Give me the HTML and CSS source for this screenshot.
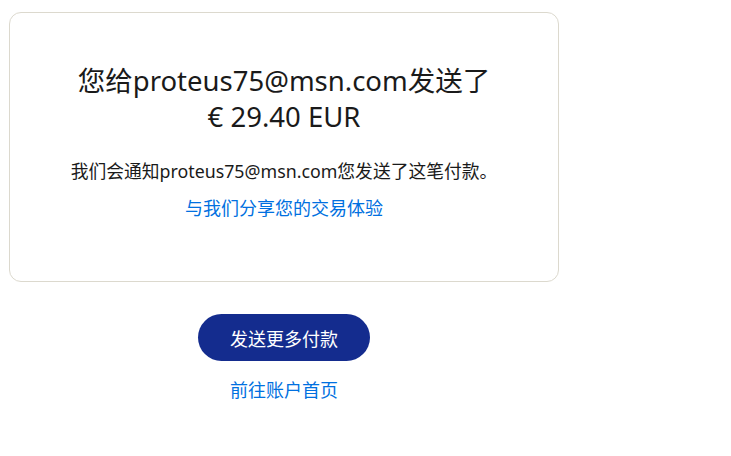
FILE: index.html
```html
<!DOCTYPE html>
<html lang="zh-CN">
<head>
<meta charset="utf-8">
<title>付款已发送</title>
<link rel="stylesheet" href="styles.css">
</head>
<body>
<main class="page">
  <section class="card">
    <h1 class="title">您给proteus75@msn.com发送了<br>€ 29.40 EUR</h1>
    <p class="note">我们会通知proteus75@msn.com您发送了这笔付款。</p>
    <a class="link" href="#">与我们分享您的交易体验</a>
  </section>
  <div class="actions">
    <a class="btn" href="#">发送更多付款</a>
    <a class="link" href="#">前往账户首页</a>
  </div>
</main>
</body>
</html>
```
FILE: styles.css
```css
* { box-sizing: border-box; }
html, body { margin: 0; padding: 0; background: #fff; }
body {
  font-family: "Noto Sans", "Noto Sans CJK SC", sans-serif;
  color: #1a1a1a;
}
.page {
  width: 550px;
  margin: 12px 0 0 9px;
  display: flex;
  flex-direction: column;
  align-items: center;
}
.card {
  width: 550px;
  height: 270px;
  border: 1px solid #dcd9ce;
  border-radius: 12px;
  padding-top: 50px;
  display: flex;
  flex-direction: column;
  align-items: center;
  text-align: center;
}
.title {
  margin: 0;
  font-size: 27.5px;
  line-height: 36px;
  font-weight: 400;
  color: #1a1a1a;
}
.note {
  margin: 24px 0 0;
  font-size: 17.8px;
  line-height: 24px;
}
.link {
  color: #0070e0;
  text-decoration: none;
  font-size: 18px;
  line-height: 24px;
}
.card .link { margin-top: 13px; }
.actions {
  margin-top: 32px;
  display: flex;
  flex-direction: column;
  align-items: center;
  gap: 17px;
}
.btn {
  display: flex;
  align-items: center;
  justify-content: center;
  width: 172px;
  height: 47px;
  border-radius: 24px;
  background: #142c8e;
  color: #fff;
  text-decoration: none;
  font-size: 18px;
}
```
